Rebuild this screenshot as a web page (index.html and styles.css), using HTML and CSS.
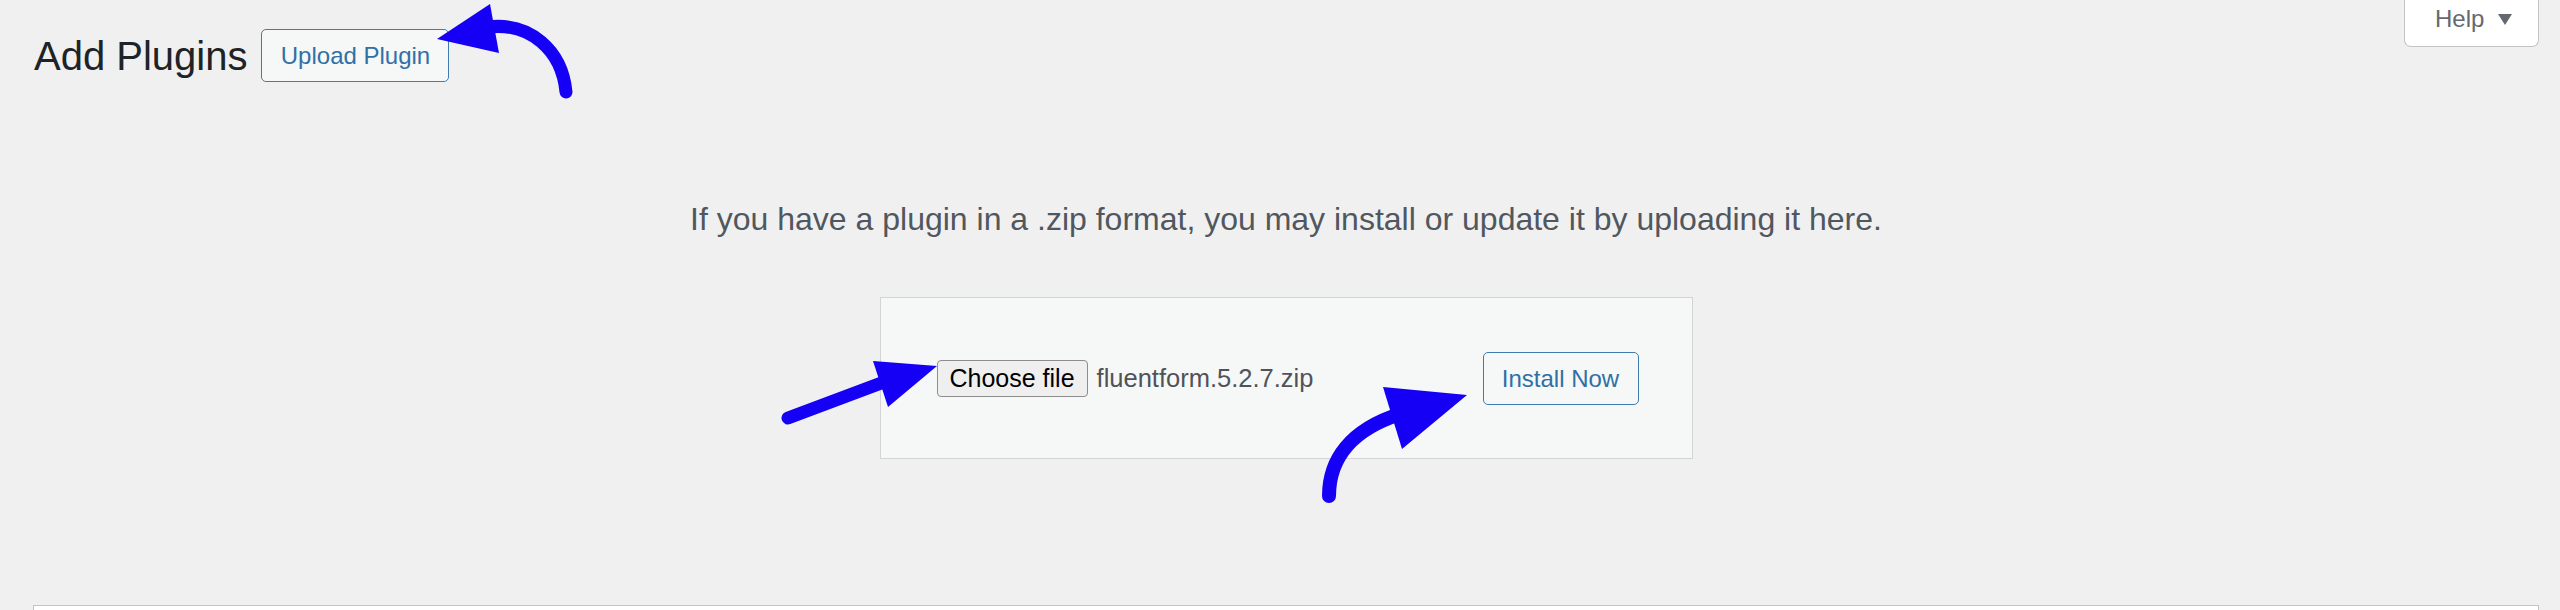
FILE: index.html
```html
<!DOCTYPE html>
<html lang="en">
<head>
<meta charset="utf-8">
<title>Add Plugins</title>
<link rel="stylesheet" href="styles.css">
</head>
<body>
<div class="wrap">
  <div class="top">
    <div class="title-row">
      <h1 class="page-title">Add Plugins</h1>
      <span class="btn page-title-action">Upload Plugin</span>
    </div>
    <div class="help-tab">
      <span>Help</span>
      <svg class="help-caret" width="14" height="11" viewBox="0 0 14 11"><polygon points="0,0 14,0 7,11" fill="#646970"/></svg>
    </div>
  </div>
  <div class="upload-area">
    <p class="install-help">If you have a plugin in a .zip format, you may install or update it by uploading it here.</p>
    <div class="upload-form">
      <div class="file-field">
        <span class="choose">Choose file</span>
        <span class="fname">fluentform.5.2.7.zip</span>
      </div>
      <span class="btn install">Install Now</span>
    </div>
  </div>
  <div class="list-box"></div>
</div>
<svg class="annotations" width="2560" height="610" viewBox="0 0 2560 610">
  <g fill="#1500f5" stroke="none">
    <polygon points="437,39 490,4 499,53"/>
    <polygon points="937,366 873,361 888,407"/>
    <polygon points="1467,395 1383,387 1402,449"/>
  </g>
  <g fill="none" stroke="#1500f5" stroke-linecap="round">
    <path d="M488 27 C530 22 562 50 566 92" stroke-width="13"/>
    <path d="M788 418 L884 382" stroke-width="13"/>
    <path d="M1329 496 C1329 460 1350 430 1400 414" stroke-width="14"/>
  </g>
</svg>
</body>
</html>
```
FILE: styles.css
```css
html {
  overflow: hidden;
  background: #f0f0f1;
}
body {
  margin: 0;
  position: relative;
  height: 610px;
  overflow: hidden;
  background: #f0f0f1;
  font-family: "Liberation Sans", Arial, sans-serif;
}
.wrap {
  padding: 0 21px 0 33px;
}
.top {
  display: flex;
  justify-content: space-between;
  align-items: flex-start;
  height: 82px;
}
.title-row {
  display: flex;
  align-items: center;
  margin-top: 29px;
  height: 53px;
}
.page-title {
  margin: 0;
  padding-left: 1px;
  font-size: 40px;
  font-weight: 400;
  line-height: 46px;
  color: #1d2327;
}
.btn {
  display: inline-flex;
  align-items: center;
  justify-content: center;
  height: 53px;
  box-sizing: border-box;
  border: 1px solid #3f7cad;
  border-radius: 5px;
  background: #f6f7f7;
  color: #2f70a6;
  font-size: 24px;
  padding: 0 19px;
  white-space: nowrap;
}
.page-title-action {
  margin-left: 14px;
  width: 188px;
  padding: 0;
}
.help-tab {
  display: flex;
  align-items: center;
  width: 135px;
  height: 47px;
  box-sizing: border-box;
  padding: 0 0 9px 30px;
  border: 1px solid #c3c4c7;
  border-top: 0;
  border-radius: 0 0 7px 7px;
  background: #fff;
  color: #646970;
  font-size: 24px;
}
.help-caret {
  margin-left: 14px;
  margin-top: 2px;
}
.install-help {
  margin: 115px 0 0;
  text-align: center;
  font-size: 32px;
  line-height: 44px;
  color: #50575e;
}
.upload-form {
  display: flex;
  align-items: center;
  width: max-content;
  margin: 56px auto 0;
  padding: 54px 53px 53px 56px;
  border: 1px solid #d3d4d6;
  background: #f6f7f7;
}
.file-field {
  display: flex;
  align-items: center;
  width: 546px;
}
.choose {
  display: inline-flex;
  align-items: center;
  height: 37px;
  box-sizing: border-box;
  padding: 0 12px;
  border: 1px solid #8d8d8d;
  border-radius: 4px;
  background: #efefef;
  color: #000;
  font-size: 25px;
}
.fname {
  margin-left: 9px;
  font-size: 25.5px;
  color: #4f5358;
}
.install {
  width: 156px;
  padding: 0;
}
.list-box {
  margin-top: 146px;
  height: 10px;
  border: 1px solid #c3c4c7;
  border-bottom: 0;
  background: #fff;
}
.annotations {
  position: absolute;
  top: 0;
  left: 0;
  pointer-events: none;
}
```
